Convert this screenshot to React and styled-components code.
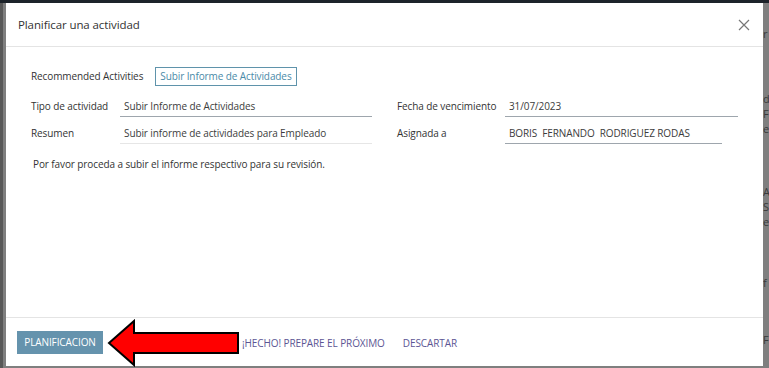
import React from "react";
import styled, { createGlobalStyle } from "styled-components";

const GlobalStyle = createGlobalStyle`
  html, body {
    margin: 0;
    padding: 0;
    width: 769px;
    height: 368px;
    overflow: hidden;
    background: #7f7f7f;
    font-family: "Open Sans", "Noto Sans", sans-serif;
  }
`;

const Page = styled.div`
  position: relative;
  width: 769px;
  height: 368px;
  display: flex;
  flex-direction: column;
  background: #7f7f7f;
`;

const TopBar = styled.div`
  height: 3px;
  background: #1d232a;
  flex-shrink: 0;
`;

const Backdrop = styled.div`
  flex: 1;
  display: grid;
  grid-template-columns: 3px 1fr 6px;
`;

const LeftEdge = styled.div`
  background: #585858;
`;

const RightColumn = styled.div`
  display: flex;
  flex-direction: column;
  padding-top: 23px;
  font-size: 11px;
  color: #3a3a3a;
  line-height: 15px;
  overflow: hidden;
  white-space: nowrap;
`;

const BgLine = styled.div`
  margin-top: ${(p) => p.$gap || 0}px;
`;

const Overlay = styled.div`
  position: absolute;
  top: 3px;
  left: 6px;
  width: 757px;
  height: 363px;
  background: #fff;
  display: flex;
  flex-direction: column;
`;

const Header = styled.div`
  height: 43px;
  border-bottom: 1px solid #e4e4e4;
  display: flex;
  align-items: center;
  justify-content: space-between;
  padding: 0 12px 0 12px;
  flex-shrink: 0;
`;

const Title = styled.div`
  font-size: 11.5px;
  color: #333;
  letter-spacing: -0.1px;
`;

const Close = styled.button`
  border: none;
  background: none;
  padding: 0;
  width: 14px;
  height: 14px;
  display: flex;
  cursor: pointer;
`;

const Body = styled.div`
  flex: 1;
  padding: 19px 24px 0 25px;
  font-size: 10px;
  color: #333;
  letter-spacing: -0.1px;
`;

const RecRow = styled.div`
  display: flex;
  align-items: center;
  gap: 12px;
  height: 20px;
`;

const RecButton = styled.button`
  font-family: inherit;
  font-size: 10px;
  letter-spacing: -0.1px;
  color: #4a8aa8;
  background: #fff;
  border: 1px solid #5f93ab;
  height: 19px;
  padding: 0 4px;
`;

const FieldGrid = styled.div`
  margin-top: 12px;
  display: grid;
  grid-template-columns: 89px 252px 25px 108px 233px;
  row-gap: 8px;
`;

const Label = styled.div`
  height: 19px;
  line-height: 16px;
`;

const Input = styled.div`
  height: 18px;
  line-height: 17px;
  padding-left: 4px;
  color: #3c3c3c;
  border-bottom: 1px solid ${(p) => (p.$light ? "#e6e6e6" : "#9ea6ad")};
  margin-right: ${(p) => p.$short || 0}px;
  white-space: pre;
`;

const Note = styled.p`
  margin: 13px 0 0 2px;
`;

const Footer = styled.div`
  height: 48px;
  border-top: 1px solid #e4e4e4;
  display: flex;
  align-items: center;
  padding: 0 11px;
  position: relative;
  flex-shrink: 0;
`;

const PrimaryButton = styled.button`
  font-family: inherit;
  font-size: 10px;
  letter-spacing: -0.1px;
  color: #fff;
  background: #6593ad;
  border: none;
  height: 23px;
  width: 86px;
  padding: 0;
`;

const LinkButton = styled.button`
  font-family: inherit;
  font-size: 10px;
  letter-spacing: -0.1px;
  color: #5c5694;
  background: none;
  border: none;
  padding: 0;
  margin-left: ${(p) => p.$ml}px;
  margin-top: 2px;
`;

const Arrow = styled.svg`
  position: absolute;
  left: 101px;
  top: 1px;
`;

export default function App() {
  return (
    <>
      <GlobalStyle />
      <Page>
        <TopBar />
        <Backdrop>
          <LeftEdge />
          <div />
          <RightColumn>
            <BgLine>r</BgLine>
            <BgLine $gap={50}>d</BgLine>
            <BgLine>F</BgLine>
            <BgLine>e</BgLine>
            <BgLine $gap={48}>A</BgLine>
            <BgLine>S</BgLine>
            <BgLine>e</BgLine>
            <BgLine $gap={46}>f</BgLine>
            <BgLine $gap={42}>F</BgLine>
          </RightColumn>
        </Backdrop>
        <Overlay>
          <Header>
            <Title>Planificar una actividad</Title>
            <Close aria-label="Cerrar">
              <svg width="14" height="14" viewBox="0 0 14 14">
                <path d="M2 2 L12 12 M12 2 L2 12" stroke="#777" strokeWidth="1.2" />
              </svg>
            </Close>
          </Header>
          <Body>
            <RecRow>
              <span>Recommended Activities</span>
              <RecButton>Subir Informe de Actividades</RecButton>
            </RecRow>
            <FieldGrid>
              <Label>Tipo de actividad</Label>
              <Input>Subir Informe de Actividades</Input>
              <div />
              <Label>Fecha de vencimiento</Label>
              <Input>31/07/2023</Input>
              <Label>Resumen</Label>
              <Input $light>Subir informe de actividades para Empleado</Input>
              <div />
              <Label>Asignada a</Label>
              <Input $short={16}>BORIS  FERNANDO  RODRIGUEZ RODAS</Input>
            </FieldGrid>
            <Note>Por favor proceda a subir el informe respectivo para su revisión.</Note>
          </Body>
          <Footer>
            <PrimaryButton>PLANIFICACION</PrimaryButton>
            <LinkButton $ml={139}>¡HECHO! PREPARE EL PRÓXIMO</LinkButton>
            <LinkButton $ml={18}>DESCARTAR</LinkButton>
            <Arrow width="134" height="48" viewBox="0 0 134 48">
              <polygon
                points="2,24 27,2 27,14 131,14 131,34 27,34 27,46"
                fill="#ff0000"
                stroke="#000"
                strokeWidth="2"
                strokeLinejoin="miter"
              />
            </Arrow>
          </Footer>
        </Overlay>
      </Page>
    </>
  );
}
